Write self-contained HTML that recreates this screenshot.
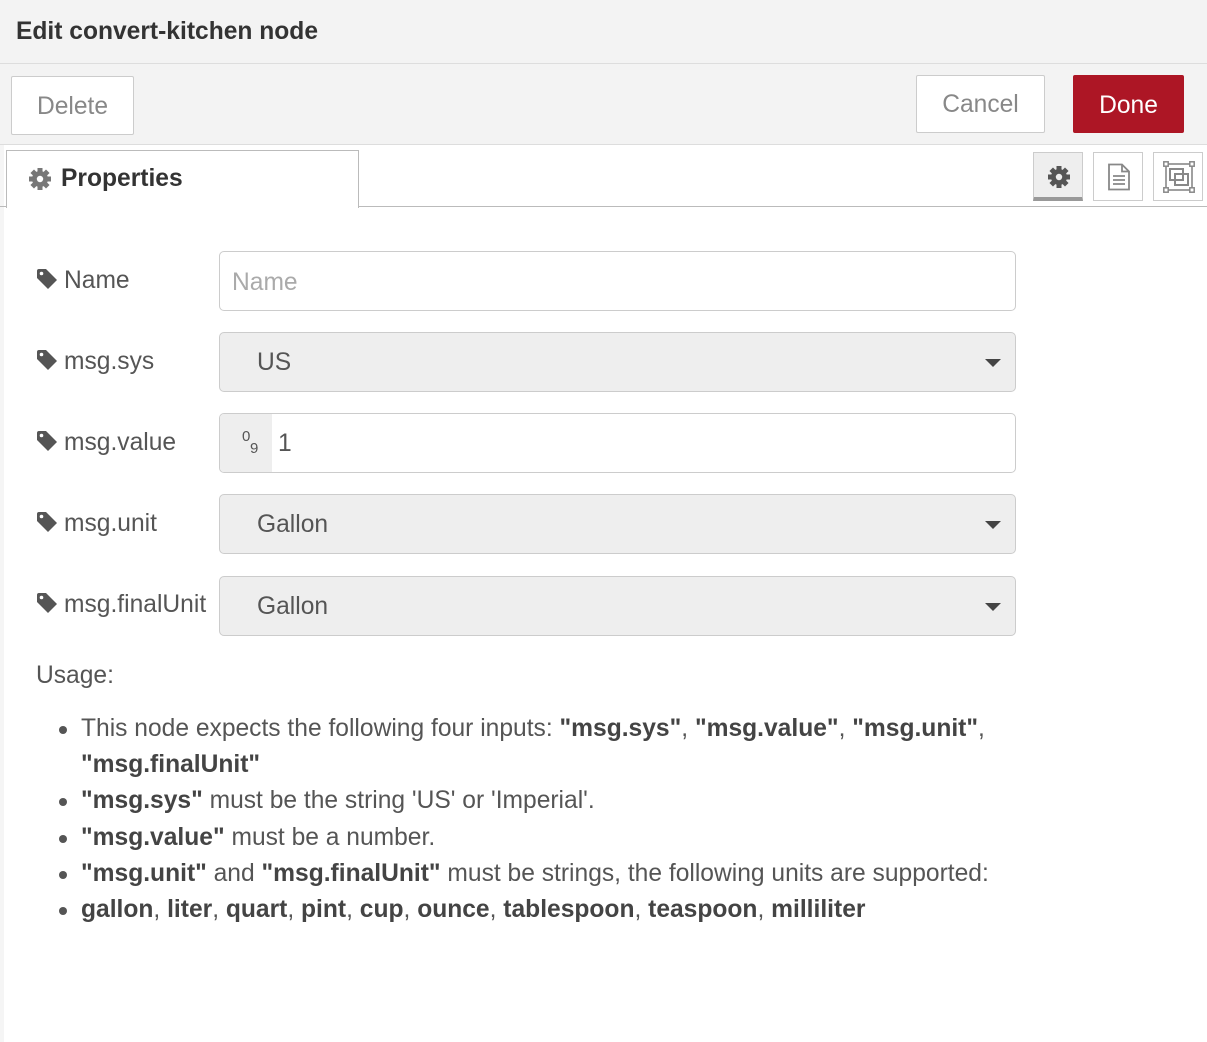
<!DOCTYPE html>
<html><head><meta charset="utf-8"><style>
*{box-sizing:border-box;margin:0;padding:0}
body{width:1207px;height:1042px;overflow:hidden;background:#fff;font-family:"Liberation Sans",Arial,sans-serif;color:#555;position:relative}
.abs{position:absolute}
.hdr{left:0;top:0;width:1207px;height:64px;background:#f3f3f3;border-bottom:1px solid #ddd}
.hdr span{position:absolute;left:16px;top:18px;font-size:24.6px;font-weight:bold;color:#333}
.bar{left:0;top:64px;width:1207px;height:81px;background:#f3f3f3;border-bottom:1px solid #ddd}
.btn{position:absolute;background:#fff;border:1px solid #ccc;border-radius:2px;font-size:24.6px;color:#888;text-align:center}
.stripe{left:0;top:145px;width:4px;height:897px;background:#f5f5f5}
.tab{left:6px;top:150px;width:353px;height:58px;border:1px solid #bbb;border-bottom:none;background:#fff}
.tabline{left:0;top:206px;width:1207px;height:1px;background:#bbb}
.tb{position:absolute;top:152px;width:50px;height:49px;border:1px solid #ccc;background:#fff}
.lbl{position:absolute;left:36px;font-size:24.6px;color:#555}
.lbl svg{position:absolute;left:0;top:2px}
.lbl span{position:absolute;left:28px;top:1px;white-space:nowrap}
.inp{position:absolute;left:219px;width:797px;height:60px;border:1px solid #ccc;border-radius:5px;font-size:24.6px;color:#555}
.sel{background:#eee}
.sel span{position:absolute;left:37px;top:16px}
.sel i{position:absolute;right:14px;top:26px;width:0;height:0;border-left:8px solid transparent;border-right:8px solid transparent;border-top:8px solid #444}
ul{position:absolute;left:81px;top:711px;font-size:24.6px;line-height:36.2px;list-style:none;width:1050px}
li{position:relative}
li:before{content:"";position:absolute;left:-22px;top:15px;width:8px;height:8px;border-radius:50%;background:#555}
b{color:#444}
</style></head><body>
<div class="abs hdr"><span>Edit convert-kitchen node</span></div>
<div class="abs bar">
 <div class="btn" style="left:11px;top:12px;width:123px;height:59px;line-height:59px">Delete</div>
 <div class="btn" style="left:916px;top:11px;width:129px;height:58px;line-height:58px">Cancel</div>
 <div class="btn" style="left:1073px;top:11px;width:111px;height:58px;line-height:60px;background:#ad1625;border-color:#ad1625;color:#fff">Done</div>
</div>
<div class="abs stripe"></div>
<div class="abs tabline"></div>
<div class="abs tab">
 <svg class="abs" style="left:21px;top:16px" width="24" height="24" viewBox="-12 -12 24 24"><g fill="#777"><circle r="8"/><g><rect x="-2.5" y="-11" width="5" height="22"/><rect x="-2.5" y="-11" width="5" height="22" transform="rotate(45)"/><rect x="-2.5" y="-11" width="5" height="22" transform="rotate(90)"/><rect x="-2.5" y="-11" width="5" height="22" transform="rotate(135)"/></g></g><circle r="3.2" fill="#fff"/></svg>
 <span class="abs" style="left:54px;top:14px;font-size:24.6px;font-weight:bold;color:#333">Properties</span>
</div>
<div class="tb" style="left:1033px;background:#eee;border-bottom:4px solid #999">
 <svg class="abs" style="left:13px;top:12px" width="24" height="24" viewBox="-12 -12 24 24"><g fill="#555"><circle r="8"/><rect x="-2.5" y="-11" width="5" height="22"/><rect x="-2.5" y="-11" width="5" height="22" transform="rotate(45)"/><rect x="-2.5" y="-11" width="5" height="22" transform="rotate(90)"/><rect x="-2.5" y="-11" width="5" height="22" transform="rotate(135)"/></g><circle r="3.2" fill="#eee"/></svg>
</div>
<div class="tb" style="left:1093px">
 <svg class="abs" style="left:13px;top:10px" width="24" height="28" viewBox="0 0 24 28"><path d="M2 1.5H15L22 8.5V26.5H2Z M15 1.5V8.5H22" fill="none" stroke="#888" stroke-width="1.8"/><path d="M6 13H18M6 17H18M6 21H18" stroke="#888" stroke-width="1.8"/></svg>
</div>
<div class="tb" style="left:1153px">
 <svg class="abs" style="left:9px;top:8px" width="32" height="32" viewBox="0 0 32 32"><rect x="3" y="3" width="26" height="26" fill="none" stroke="#888" stroke-width="1.6"/><rect x="7" y="8" width="13" height="11" fill="none" stroke="#888" stroke-width="2"/><rect x="12" y="13" width="13" height="11" fill="none" stroke="#888" stroke-width="2"/><g fill="#fff" stroke="#888" stroke-width="1.5"><rect x="0.8" y="0.8" width="4.4" height="4.4"/><rect x="26.8" y="0.8" width="4.4" height="4.4"/><rect x="0.8" y="26.8" width="4.4" height="4.4"/><rect x="26.8" y="26.8" width="4.4" height="4.4"/></g></svg>
</div>

<div class="lbl" style="top:266px"><svg width="22" height="22" viewBox="0 0 22 22"><path d="M1 3Q1 1 3 1H10L21 12L12 21L1 10Z" fill="#555"/><circle cx="5.5" cy="5.5" r="1.8" fill="#fff"/></svg><span>Name</span></div>
<div class="lbl" style="top:347px"><svg width="22" height="22" viewBox="0 0 22 22"><path d="M1 3Q1 1 3 1H10L21 12L12 21L1 10Z" fill="#555"/><circle cx="5.5" cy="5.5" r="1.8" fill="#fff"/></svg><span>msg.sys</span></div>
<div class="lbl" style="top:428px"><svg width="22" height="22" viewBox="0 0 22 22"><path d="M1 3Q1 1 3 1H10L21 12L12 21L1 10Z" fill="#555"/><circle cx="5.5" cy="5.5" r="1.8" fill="#fff"/></svg><span>msg.value</span></div>
<div class="lbl" style="top:509px"><svg width="22" height="22" viewBox="0 0 22 22"><path d="M1 3Q1 1 3 1H10L21 12L12 21L1 10Z" fill="#555"/><circle cx="5.5" cy="5.5" r="1.8" fill="#fff"/></svg><span>msg.unit</span></div>
<div class="lbl" style="top:590px"><svg width="22" height="22" viewBox="0 0 22 22"><path d="M1 3Q1 1 3 1H10L21 12L12 21L1 10Z" fill="#555"/><circle cx="5.5" cy="5.5" r="1.8" fill="#fff"/></svg><span>msg.finalUnit</span></div>

<div class="inp" style="top:251px"><span class="abs" style="left:12px;top:17px;color:#aaa">Name</span></div>
<div class="inp sel" style="top:332px"><span>US</span><i></i></div>
<div class="inp" style="top:413px;overflow:hidden"><div class="abs" style="left:0;top:0;width:52px;height:58px;background:#eee"></div><span class="abs" style="left:22px;top:14px;font-size:15px">0</span><span class="abs" style="left:30px;top:26px;font-size:15px">9</span><span class="abs" style="left:58px;top:16px">1</span></div>
<div class="inp sel" style="top:494px"><span>Gallon</span><i></i></div>
<div class="inp sel" style="top:576px"><span>Gallon</span><i></i></div>

<div class="abs" style="left:36px;top:662px;font-size:24.6px">Usage:</div>
<ul>
<li>This node expects the following four inputs: <b>"msg.sys"</b>, <b>"msg.value"</b>, <b>"msg.unit"</b>,<br><b>"msg.finalUnit"</b></li>
<li><b>"msg.sys"</b> must be the string 'US' or 'Imperial'.</li>
<li><b>"msg.value"</b> must be a number.</li>
<li><b>"msg.unit"</b> and <b>"msg.finalUnit"</b> must be strings, the following units are supported:</li>
<li><b>gallon</b>, <b>liter</b>, <b>quart</b>, <b>pint</b>, <b>cup</b>, <b>ounce</b>, <b>tablespoon</b>, <b>teaspoon</b>, <b>milliliter</b></li>
</ul>
</body></html>
